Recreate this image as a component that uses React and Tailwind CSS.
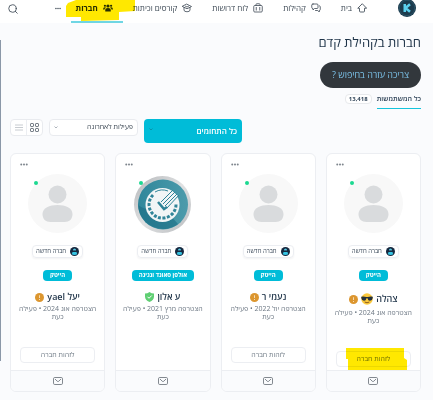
import { useState } from 'react';

const NAV = [
  { label: 'בית', icon: HomeIcon },
  { label: 'קהילות', icon: ChatIcon },
  { label: 'לוח דרושות', icon: BagIcon },
  { label: 'קורסים וכיתות', icon: CourseIcon },
  { label: 'חברות', icon: UsersIcon, active: true },
];

const MEMBERS = [
  { id: 1, name: 'צהלה', tag: 'הייטק', joined: 'אוג 2024', cool: true, canContact: true, marked: true },
  { id: 2, name: 'נעמי ר', tag: 'הייטק', joined: 'יול 2022', canContact: true },
  { id: 3, name: 'ע אלון', tag: 'אולפן סאונד ונגינה', joined: 'מרץ 2021', verified: true, logo: true },
  { id: 4, name: 'יעל yael', tag: 'הייטק', joined: 'אוג 2024', canContact: true },
];

function HomeIcon() {
  return (
    <svg className="h-2.5 w-2.5" viewBox="0 0 20 20" fill="none" stroke="currentColor" strokeWidth="1.7" strokeLinejoin="round" strokeLinecap="round">
      <path d="M10 2 1.5 10.5H5V16q0 2 2 2h6q2 0 2-2v-5.500h3.500Z" />
    </svg>
  );
}

function ChatIcon() {
  return (
    <svg className="h-2.5 w-2.5" viewBox="0 0 20 20" fill="none" stroke="currentColor" strokeWidth="1.6" strokeLinejoin="round" strokeLinecap="round">
      <path d="M4 2h8q2 0 2 2v5q0 2-2 2H7l-3 3v-3q-2.500 0-2.500-2V4q0-2 2.500-2Z" />
      <path d="M17 5.500q1.500.5 1.500 2V13q0 2-2 2v3l-3-3H9" />
    </svg>
  );
}

function BagIcon() {
  return (
    <svg className="h-2.5 w-2.5" viewBox="0 0 20 20" fill="none" stroke="currentColor" strokeWidth="1.6" strokeLinejoin="round">
      <rect x="1.500" y="5" width="17" height="13" rx="2" />
      <path d="M6 5V3q0-1.500 1.500-1.500h5Q14 1.500 14 3v2M6.500 8v7M13.500 8v7" />
    </svg>
  );
}

function CourseIcon() {
  return (
    <svg className="h-2.5 w-2.5" viewBox="0 0 20 20" fill="none" stroke="currentColor" strokeWidth="1.6" strokeLinejoin="round" strokeLinecap="round">
      <path d="M10 2.500 19 7l-9 4.500L1 7ZM4 9v5q0 3.500 6 3.500t6-3.500V9M7 6.500l3 1.500 3-1.500" />
    </svg>
  );
}

function UsersIcon() {
  return (
    <svg className="h-2.5 w-2.5" viewBox="0 0 20 20" fill="currentColor">
      <circle cx="10" cy="6" r="3.200" />
      <circle cx="3.800" cy="5.500" r="2.200" />
      <circle cx="16.200" cy="5.500" r="2.200" />
      <path d="M4.500 17v-3q0-4 5.500-4t5.500 4v3ZM0 13q0-4.500 4-4.500 1.500 0 2 .8-3 1.500-3 3.700ZM20 13q0-4.500-4-4.500-1.500 0-2 .8 3 1.500 3 3.700Z" />
    </svg>
  );
}

function SearchIcon() {
  return (
    <svg className="h-2.5 w-2.5" viewBox="0 0 20 20" fill="none" stroke="currentColor" strokeWidth="1.700" strokeLinecap="round">
      <circle cx="9" cy="9" r="7.500" />
      <path d="m14.500 14.500 4 4" />
    </svg>
  );
}

function Dots({ className }) {
  return (
    <svg className={className} viewBox="0 0 16 6" fill="currentColor">
      <circle cx="2.500" cy="3" r="2" />
      <circle cx="8" cy="3" r="2" />
      <circle cx="13.500" cy="3" r="2" />
    </svg>
  );
}

function Logo() {
  return (
    <svg className="h-[18px] w-[18px]" viewBox="0 0 36 36">
      <circle cx="18" cy="18" r="18" fill="#1c3b4d" />
      <circle cx="18" cy="18" r="15.500" fill="none" stroke="#2d5a6e" strokeWidth="1.500" />
      <path d="M13.500 10v16M24 10.500 15 18l9 7.500" fill="none" stroke="#5bd0ee" strokeWidth="5" />
    </svg>
  );
}

function MailIcon() {
  return (
    <svg className="h-2 w-2.5" viewBox="0 0 20 16" fill="none" stroke="currentColor" strokeWidth="1.700" strokeLinejoin="round">
      <rect x="1" y="1" width="18" height="14" rx="2.500" />
      <path d="m4 4 4.500 4.500q1.500 1.200 3 0L16 4" />
    </svg>
  );
}

function PersonAvatar() {
  return (
    <svg className="h-[59px] w-[59px]" viewBox="0 0 59 59">
      <circle cx="29.500" cy="29.500" r="29.500" fill="#f8f8f8" />
      <circle cx="29.500" cy="20.500" r="9" fill="#d9dbdd" />
      <path d="M14.500 40c0-6 7-9 15-9s15 3 15 9c0 5-3 8-8 8h-14c-5 0-8-3-8-8Z" fill="#d9dbdd" />
    </svg>
  );
}

function DialAvatar() {
  return (
    <svg className="h-[59px] w-[59px]" viewBox="0 0 59 59">
      <defs>
        <linearGradient id="rim" x1="0" y1="0" x2="1" y2="1">
          <stop offset="0" stopColor="#b4b7ba" />
          <stop offset=".5" stopColor="#e0e1e2" />
          <stop offset="1" stopColor="#b9bcbf" />
        </linearGradient>
        <linearGradient id="dial" x1="0" y1="0" x2="1" y2="0">
          <stop offset="0" stopColor="#2f879b" />
          <stop offset="1" stopColor="#4d9bab" />
        </linearGradient>
      </defs>
      <circle cx="29.500" cy="30.500" r="28.500" fill="url(#rim)" />
      <circle cx="30" cy="30.500" r="25" fill="url(#dial)" />
      <path d="M5 31q8 6 18 5t22 14a25 25 0 0 1-40-19Z" fill="#1a6c84" opacity=".6" />
      <circle cx="29.500" cy="31" r="17" fill="#f1f5f6" />
      <path d="M20 21a13.500 13.500 0 1 0 23 9" fill="none" stroke="#2f8498" strokeWidth="3" strokeDasharray="3 1.500" />
      <path d="M22 18a15 15 0 0 1 13-1" fill="none" stroke="#2f8498" strokeWidth="1" />
      <path d="m28 28 11-11 6 5-12 13Z" fill="#f1f5f6" />
      <path d="m28 28 12-12m-10 14 12-12M32 32l12-12m-10 14 12-13" stroke="#2f8498" strokeWidth="1" />
      <path d="m25 28 6 7 3-2" fill="none" stroke="#2f8498" strokeWidth="2.500" />
    </svg>
  );
}

function BotIcon() {
  return (
    <svg className="h-[9px] w-[9px]" viewBox="0 0 18 18">
      <circle cx="9" cy="9" r="9" fill="#16283f" />
      <path d="M6 8V6q0-3 3-3t3 3v2Z" fill="#58c9e4" />
      <path d="M3.500 14.500 5 10h8l1.500 4.500q-5.500 3-11 0Z" fill="#35c4e2" />
      <path d="M6 7h6" stroke="#16283f" strokeWidth="1.200" />
    </svg>
  );
}

function CoolFace() {
  return (
    <svg className="h-3 w-3" viewBox="0 0 24 24">
      <circle cx="12" cy="12" r="11.500" fill="#fbc93d" />
      <path d="M.5 7.500q5-1 10 .5h3q5-1.500 10-.5v2.500q-1 5.500-5.500 5.500-4 0-5-5h-2q-1 5-5 5Q1.500 15.500.5 10Z" fill="#26323c" />
      <path d="M8 18.500q4 2.500 8 0" fill="none" stroke="#7a4b18" strokeWidth="1.700" strokeLinecap="round" />
    </svg>
  );
}

function StatusMark({ verified }) {
  if (verified) {
    return (
      <svg className="h-2.5 w-[9px]" viewBox="0 0 18 20">
        <path d="M9 0q4 3 9 3v6q0 7-9 11Q0 16 0 9V3q5 0 9-3Z" fill="#5fcf73" />
        <path d="m5 9.500 3 3 5.500-5.500" fill="none" stroke="#fff" strokeWidth="2" />
      </svg>
    );
  }
  return (
    <svg className="h-[9px] w-[9px]" viewBox="0 0 18 18">
      <circle cx="9" cy="9" r="9" fill="#dc962f" />
      <path d="M9 4.500v5.500M9 12v2" stroke="#f7e3c3" strokeWidth="1.800" />
    </svg>
  );
}

function MemberCard({ member }) {
  return (
    <article className="flex min-w-0 flex-col overflow-hidden rounded-md border border-[#eceef2] bg-white">
      <div className="flex flex-col items-center px-[9px] pt-[9px] pb-[3px]">
        <button aria-label="אפשרויות" className="self-end text-[#7d848c]">
          <Dots className="h-[3px] w-2" />
        </button>
        <div className="relative mt-2">
          {member.logo ? <DialAvatar /> : <PersonAvatar />}
          <span className="absolute top-[7px] left-1.5 h-1 w-1 rounded-full bg-[#1cd991]" />
        </div>
        <div className="mt-3 flex h-[13px] items-center gap-1 rounded-sm border border-[#eceef2] px-[3px] text-[6px] font-medium whitespace-nowrap text-[#3c4a5a] shadow-xs">
          <BotIcon />
          חברה חדשה
        </div>
        <span className="mt-3 flex h-[11px] items-center rounded-sm bg-[#00bcd8] px-[7px] text-[6px] font-bold whitespace-nowrap text-white">
          {member.tag}
        </span>
        <h2 className="mt-2.5 flex items-center gap-[3px] text-[9px] leading-3 font-semibold text-[#1e3348]">
          {member.name}
          {member.cool && <span className="py-0.5"><CoolFace /></span>}
          <StatusMark verified={member.verified} />
        </h2>
        <p className="mt-0.5 text-center text-[7px] leading-2 whitespace-nowrap text-[#6d7884]">
          הצטרפה {member.joined} • פעילה
          <br />
          כעת
        </p>
        {member.canContact && (
          <div className="relative mt-[26px] w-full">
            <button className="block h-4 w-full rounded-sm border border-[#eceef2] text-[7px] text-[#727d88]">
              לזהות חברה
            </button>
            {member.marked && (
              <svg className="pointer-events-none absolute -top-[3px] left-2.5 h-[22px] w-[61px] mix-blend-multiply" viewBox="0 0 61 22">
                <path d="M0 0H58V10L61 12V22H2V11H0Z" fill="#ffe800" />
              </svg>
            )}
          </div>
        )}
      </div>
      <div className="mt-auto flex h-[21px] items-center justify-center border-t border-[#eceef2] bg-[#fafbfd] text-[#6d747c]">
        <button aria-label="שליחת הודעה">
          <MailIcon />
        </button>
      </div>
    </article>
  );
}

function Select({ label, options, className, arrow }) {
  return (
    <div className="relative">
      <select aria-label={label} className={className}>
        {options.map((o) => (
          <option key={o}>{o}</option>
        ))}
      </select>
      <svg className={`pointer-events-none absolute top-[7px] left-[5px] h-[3px] w-1 ${arrow}`} viewBox="0 0 8 6" fill="none" stroke="currentColor" strokeWidth="1.800">
        <path d="m1 1 3 3 3-3" />
      </svg>
    </div>
  );
}

export default function App() {
  const [view, setView] = useState('grid');

  return (
    <div dir="rtl" className="relative bg-[#fafbfd] pb-[9px] font-['Open_Sans','Liberation_Sans',sans-serif]">
      <header className="flex h-[23px] items-start bg-white ps-[17px] pe-2 text-[8px] text-[#3c4854]">
        <a href="#" aria-label="קדם" className="-mt-px">
          <Logo />
        </a>
        <nav className="ms-[21px] flex h-full gap-[5px]">
          {NAV.map(({ label, icon: Icon, active }) => (
            <a
              key={label}
              href="#"
              className={`relative flex h-full items-center gap-[5px] border-b-2 ps-2.5 pe-[5px] pb-[5px] whitespace-nowrap ${
                active ? 'border-[#6fd6e4] font-bold text-[#26323e]' : 'border-transparent font-medium'
              }`}
            >
              <Icon />
              {label}
              {active && (
                <svg className="pointer-events-none absolute top-0 -left-[5px] h-[21px] w-[70px] mix-blend-multiply" viewBox="0 0 70 21">
                  <path d="M2 3 10 0H69V11L53 12V20L15 21V17H0V6Z" fill="#ffe800" />
                </svg>
              )}
            </a>
          ))}
        </nav>
        <button aria-label="עוד" className="ms-2.5 mt-[7px]">
          <Dots className="h-[3px] w-1.5" />
        </button>
        <button aria-label="חיפוש" className="ms-auto mt-1">
          <SearchIcon />
        </button>
      </header>

      <main className="ps-3 pe-2.5">
        <h1 className="pt-2.5 text-[13px] leading-[18px] text-[#1e3348]">חברות בקהילת קדם</h1>

        <button className="mt-[11px] flex h-[26px] items-center rounded-full bg-[#32373c] px-3 text-[9px] font-medium whitespace-nowrap text-[#7cc3ea]">
          צריכה עזרה בחיפוש ?
        </button>

        <div className="mt-1.5 flex items-start gap-[5px] text-[7px] font-semibold text-[#33475b]">
          <a href="#" className="border-b border-[#14c4dc] pb-1 leading-[10px] whitespace-nowrap">
            כל המשתמשות
          </a>
          <span className="flex h-2.5 items-center rounded-sm border border-[#e7e9ec] bg-white px-[3px] text-[6px] font-bold">
            13,418
          </span>
        </div>

        <div className="mt-2.5 flex items-start justify-end gap-1.5">
          <Select
            label="תחום"
            options={['כל התחומים']}
            arrow="mt-0.5 text-[#0a8fa6]"
            className="block h-6 w-[98px] appearance-none rounded-sm bg-[#00bcd8] ps-[5px] pe-3 text-[8px] font-semibold text-white"
          />
          <Select
            label="מיון"
            options={['פעילות לאחרונה']}
            arrow="text-[#a5acb4]"
            className="block h-[17px] w-[89px] appearance-none rounded-sm border border-[#e9ebef] bg-white ps-1 pe-3 text-[7px] text-[#3c4854]"
          />
          <div className="flex h-[17px] w-[33px] divide-x divide-[#eceef2] rounded-sm border border-[#e9ebef] bg-white">
            <button
              aria-label="רשת"
              onClick={() => setView('grid')}
              className={`flex flex-1 items-center justify-center ${view === 'grid' ? 'text-[#5d6670]' : 'text-[#c8ccd1]'}`}
            >
              <svg className="h-[9px] w-[9px]" viewBox="0 0 18 18" fill="none" stroke="currentColor" strokeWidth="2">
                <rect x="1" y="1" width="6" height="6" rx="1.500" />
                <rect x="11" y="1" width="6" height="6" rx="1.500" />
                <rect x="1" y="11" width="6" height="6" rx="1.500" />
                <rect x="11" y="11" width="6" height="6" rx="1.500" />
              </svg>
            </button>
            <button
              aria-label="רשימה"
              onClick={() => setView('list')}
              className={`flex flex-1 items-center justify-center ${view === 'list' ? 'text-[#5d6670]' : 'text-[#c8ccd1]'}`}
            >
              <svg className="h-[7px] w-2" viewBox="0 0 16 14" stroke="currentColor" strokeWidth="2">
                <path d="M0 2h16M0 7h16M0 12h16" />
              </svg>
            </button>
          </div>
        </div>

        <section className="mt-2.5 grid grid-cols-4 gap-2.5">
          {MEMBERS.map((m) => (
            <MemberCard key={m.id} member={m} />
          ))}
        </section>
      </main>

      {/* scroll thumb on the left edge */}
      <div className="absolute top-10 bottom-10 left-0 w-px bg-[#8b98a8]" />
    </div>
  );
}
